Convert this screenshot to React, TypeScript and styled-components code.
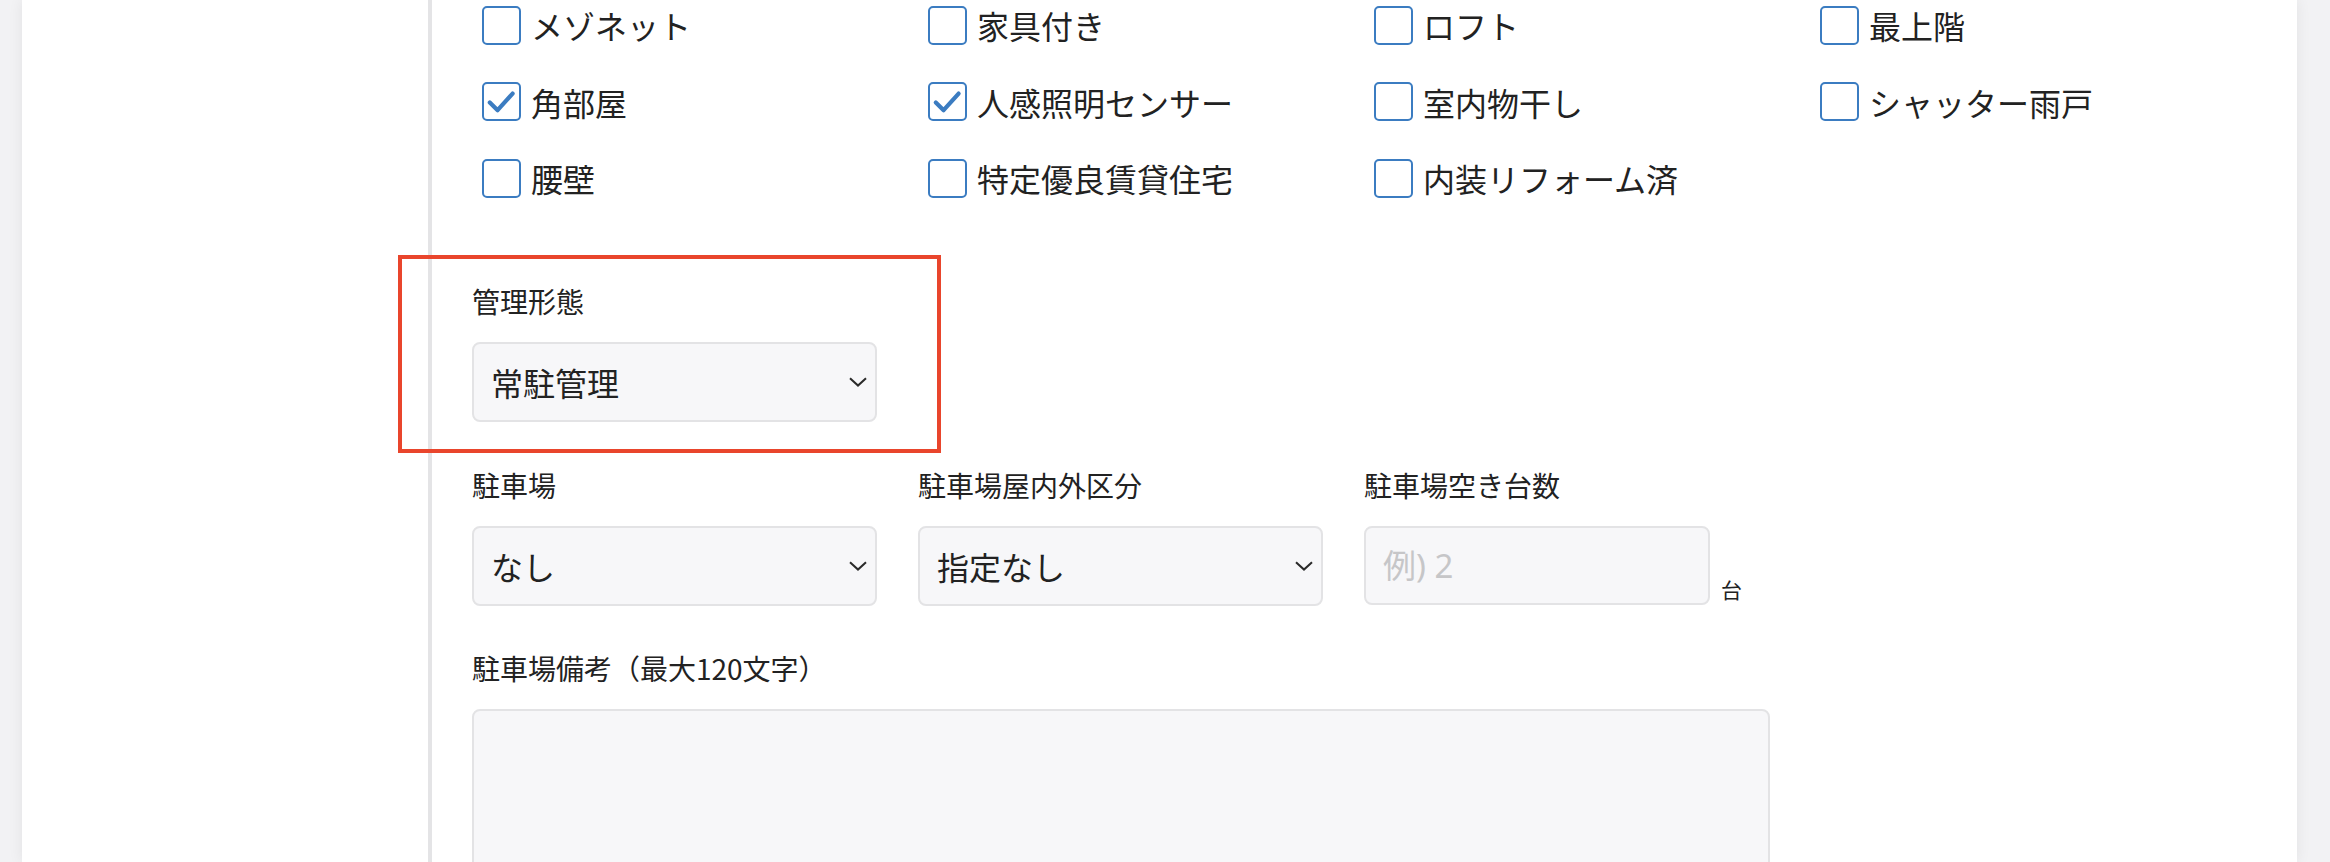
import React from "react";
import styled, { createGlobalStyle } from "styled-components";

const GlobalStyle = createGlobalStyle`
  html, body { margin: 0; padding: 0; }
  body {
    background: #f2f2f4;
    font-family: "Noto Sans CJK JP", "Noto Sans", sans-serif;
    color: #222;
  }
  *, *::before, *::after { box-sizing: border-box; }
`;

const Page = styled.div`
  height: 862px;
  overflow: hidden;
  padding: 0 33px 0 22px;
  background: #f2f2f4;
`;

const Card = styled.div`
  display: flex;
  height: 100%;
  background: #ffffff;
  box-shadow: 0 0 14px rgba(0, 0, 0, 0.07);
`;

const Sidebar = styled.aside`
  flex: none;
  width: 406px;
`;

const Divider = styled.div`
  flex: none;
  width: 4px;
  background: #e4e4e6;
`;

const Main = styled.main`
  flex: 1;
  padding: 5px 0 0 40px;
`;

const CheckGrid = styled.div`
  display: grid;
  grid-template-columns: repeat(4, 446px);
  row-gap: 36.5px;
  padding-left: 10px;
`;

const CheckItem = styled.label`
  display: flex;
  align-items: center;
  gap: 10px;
  height: 40px;
  font-size: 32px;
  line-height: 40px;
  color: #222;
  white-space: nowrap;
`;

const Box = styled.span<{ $checked?: boolean }>`
  flex: none;
  display: flex;
  align-items: center;
  justify-content: center;
  width: 39px;
  height: 39px;
  border: 2px solid #3b7cc1;
  border-radius: 5px;
  background: #fff;
`;

const Group = styled.div<{ $top: number }>`
  margin-top: ${(p) => p.$top}px;
`;

const Anchored = styled.div`
  position: relative;
  width: 405px;
`;

const Annotation = styled.div`
  position: absolute;
  left: -74px;
  top: -25px;
  width: 543px;
  height: 198px;
  border: 4px solid #e9452c;
  pointer-events: none;
`;

const Label = styled.div`
  font-size: 28px;
  line-height: 42px;
  color: #222;
  margin-bottom: 20px;
  white-space: nowrap;
`;

const FieldRow = styled.div`
  display: grid;
  grid-template-columns: 405px 405px auto;
  column-gap: 41px;
`;

const SelectBox = styled.div<{ $width?: number }>`
  display: flex;
  align-items: center;
  justify-content: space-between;
  width: ${(p) => p.$width ?? 405}px;
  height: 80px;
  padding: 0 8px 0 17px;
  background: #f7f7f9;
  border: 2px solid #e3e3e5;
  border-radius: 8px;
  font-size: 32px;
  color: #222;
`;

const InputWrap = styled.div`
  display: flex;
  align-items: flex-end;
  gap: 11px;
`;

const TextInput = styled.input`
  width: 346px;
  height: 79px;
  padding: 0 17px;
  background: #f7f7f9;
  border: 2px solid #e3e3e5;
  border-radius: 8px;
  font-family: "Noto Sans", "Noto Sans CJK JP", sans-serif;
  font-size: 33px;
  color: #222;
  outline: none;
  &::placeholder { color: #c6c6c8; }
`;

const Unit = styled.span`
  font-size: 21px;
  line-height: 21px;
  margin-bottom: 5px;
  color: #222;
`;

const TextArea = styled.textarea`
  display: block;
  width: 1298px;
  height: 220px;
  background: #f7f7f9;
  border: 2px solid #e3e3e5;
  border-radius: 8px;
  resize: none;
  outline: none;
`;

const Check = () => (
  <svg width="35" height="35" viewBox="0 0 35 35">
    <path
      d="M5.8 18.4 L13.6 26.2 L28.6 9.6"
      fill="none"
      stroke="#3b7cc1"
      strokeWidth="4.2"
      strokeLinecap="round"
      strokeLinejoin="round"
    />
  </svg>
);

const Chevron = () => (
  <svg width="18" height="10" viewBox="0 0 18 10">
    <path d="M1 1.2 L9 8.6 L17 1.2" fill="none" stroke="#2a2a2a" strokeWidth="2" />
  </svg>
);

const features: { label: string; checked?: boolean }[] = [
  { label: "メゾネット" },
  { label: "家具付き" },
  { label: "ロフト" },
  { label: "最上階" },
  { label: "角部屋", checked: true },
  { label: "人感照明センサー", checked: true },
  { label: "室内物干し" },
  { label: "シャッター雨戸" },
  { label: "腰壁" },
  { label: "特定優良賃貸住宅" },
  { label: "内装リフォーム済" },
];

const Select = ({ value, width }: { value: string; width?: number }) => (
  <SelectBox $width={width}>
    <span>{value}</span>
    <Chevron />
  </SelectBox>
);

export default function App() {
  return (
    <>
      <GlobalStyle />
      <Page>
        <Card>
          <Sidebar />
          <Divider />
          <Main>
            <CheckGrid>
              {features.map((f) => (
                <CheckItem key={f.label}>
                  <Box $checked={f.checked}>{f.checked && <Check />}</Box>
                  <span>{f.label}</span>
                </CheckItem>
              ))}
            </CheckGrid>

            <Group $top={82}>
              <Anchored>
                <Annotation />
                <Label>管理形態</Label>
                <Select value="常駐管理" />
              </Anchored>
            </Group>

            <Group $top={42}>
              <FieldRow>
                <div>
                  <Label>駐車場</Label>
                  <Select value="なし" />
                </div>
                <div>
                  <Label>駐車場屋内外区分</Label>
                  <Select value="指定なし" />
                </div>
                <div>
                  <Label>駐車場空き台数</Label>
                  <InputWrap>
                    <TextInput placeholder="例) 2" />
                    <Unit>台</Unit>
                  </InputWrap>
                </div>
              </FieldRow>
            </Group>

            <Group $top={41}>
              <Label>駐車場備考（最大120文字）</Label>
              <TextArea />
            </Group>
          </Main>
        </Card>
      </Page>
    </>
  );
}
